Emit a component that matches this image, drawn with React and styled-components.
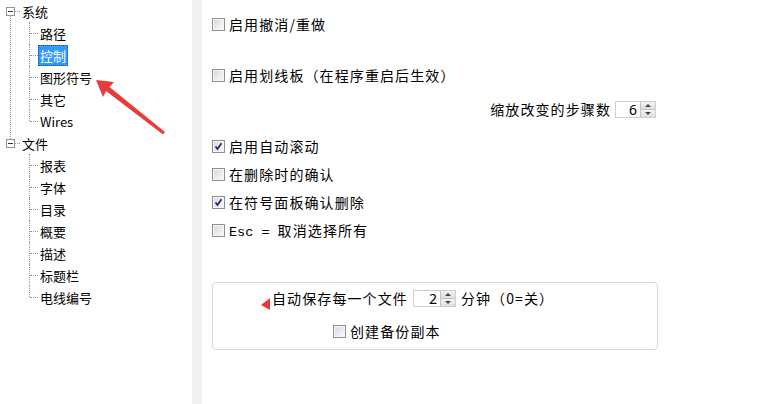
import React from "react";
import styled, { createGlobalStyle } from "styled-components";

const Global = createGlobalStyle`
  html, body { margin: 0; padding: 0; background: #fff; }
  body { font-family: "Noto Sans", "Noto Sans CJK SC", sans-serif; color: #000; }
`;

const Page = styled.div`
  position: relative;
  width: 776px;
  height: 404px;
  display: flex;
  overflow: hidden;
  background: #fff;
`;

/* ---------- tree ---------- */
const TreePanel = styled.ul`
  width: 192px;
  flex: none;
  margin: 0;
  padding: 0;
  list-style: none;
  background: #fff;
  font-family: "Noto Sans CJK SC", "Noto Sans", sans-serif;
  font-size: 13px;
`;

const TopNode = styled.li`
  position: relative;
  &::before {
    content: "";
    display: ${(p) => (p.$line ? "block" : "none")};
    position: absolute;
    left: 10px;
    top: 16px;
    bottom: -7px;
    border-left: 1px dotted #9a9a9a;
  }
`;

const TopRow = styled.div`
  height: 22px;
  display: flex;
  align-items: center;
  padding-left: 6px;
`;

const Expander = styled.span`
  position: relative;
  width: 7px;
  height: 7px;
  border: 1px solid #949494;
  background: #fff;
  flex: none;
  &::after {
    content: "";
    position: absolute;
    left: 1px;
    top: 3px;
    width: 5px;
    height: 1px;
    background: #333;
  }
`;

const HDots = styled.span`
  width: ${(p) => p.$w}px;
  border-top: 1px dotted #9a9a9a;
  flex: none;
`;

const Label = styled.span`
  display: inline-flex;
  align-items: center;
  height: 21px;
  padding: 0 2px;
  color: ${(p) => (p.$selected ? "#fff" : "#000")};
  background: ${(p) => (p.$selected ? "#3399ff" : "transparent")};
  outline: ${(p) => (p.$selected ? "1px dotted #1c4f8a" : "none")};
  outline-offset: -1px;
  white-space: nowrap;
`;

const Children = styled.ul`
  margin: 0;
  padding: 0 0 0 29px;
  list-style: none;
`;

const ChildRow = styled.li`
  position: relative;
  height: 22px;
  display: flex;
  align-items: center;
  padding-left: 9px;
  &::before {
    content: "";
    position: absolute;
    left: 0;
    top: 0;
    height: ${(p) => (p.$last ? "11px" : "22px")};
    border-left: 1px dotted #9a9a9a;
  }
  &::after {
    content: "";
    position: absolute;
    left: 1px;
    top: 11px;
    width: 8px;
    border-top: 1px dotted #9a9a9a;
  }
`;

const Strip = styled.div`
  width: 10px;
  flex: none;
  background: #f1f1f1;
`;

/* ---------- content ---------- */
const Content = styled.div`
  flex: 1;
  display: flex;
  flex-direction: column;
  padding: 10px 0 0 10px;
  font-family: "Noto Sans CJK SC", "Noto Sans", sans-serif;
  font-size: 14px;
  letter-spacing: 1.1px;
`;

const Row = styled.div`
  height: ${(p) => p.$h || 28}px;
  margin-top: ${(p) => p.$mt || 0}px;
  padding-left: ${(p) => p.$pl || 0}px;
  padding-right: ${(p) => p.$pr || 0}px;
  display: flex;
  align-items: center;
  justify-content: ${(p) => (p.$right ? "flex-end" : "flex-start")};
  gap: 4px;
  white-space: nowrap;
`;

const Box = styled.span`
  width: 11px;
  height: 11px;
  flex: none;
  border: 1px solid #8e8f8f;
  background: linear-gradient(135deg, #d6d6d6 0%, #eeeeee 60%, #fafafa 100%);
  box-shadow: inset 0 0 0 1px #f6f6f6;
  display: flex;
  align-items: center;
  justify-content: center;
`;

const Mono = styled.span`
  font-family: "Liberation Mono", monospace;
  font-size: 13.5px;
  letter-spacing: 0;
  white-space: pre;
`;

const Check = ({ checked }) => (
  <Box>
    {checked && (
      <svg width="9" height="9" viewBox="0 0 9 9">
        <path d="M1.5 4.5 L3.5 7 L7.5 1.2" fill="none" stroke="#222a7a" strokeWidth="1.8" />
      </svg>
    )}
  </Box>
);

const SpinWrap = styled.span`
  display: inline-flex;
  width: ${(p) => p.$w}px;
  height: ${(p) => p.$h}px;
  border: 1px solid #cfcfcf;
  background: #fff;
  margin-left: ${(p) => p.$ml || 0}px;
  margin-right: ${(p) => p.$mr || 0}px;
  box-sizing: border-box;
  letter-spacing: 0;
`;

const SpinValue = styled.span`
  flex: 1;
  text-align: right;
  padding-right: 3px;
  font-family: "Noto Sans", sans-serif;
  font-size: 14px;
  line-height: ${(p) => p.$h - 2}px;
`;

const SpinButtons = styled.span`
  width: 14px;
  display: flex;
  flex-direction: column;
  border-left: 1px solid #c3c3c3;
`;

const SpinBtn = styled.span`
  flex: 1;
  display: flex;
  align-items: center;
  justify-content: center;
  background: linear-gradient(#f4f4f4, #dedede);
  border-top: ${(p) => (p.$down ? "1px solid #c3c3c3" : "none")};
  &::after {
    content: "";
    border-left: 3px solid transparent;
    border-right: 3px solid transparent;
    ${(p) => (p.$down ? "border-top: 3px solid #444;" : "border-bottom: 3px solid #444;")}
  }
`;

const Spin = ({ value, w, h, ml, mr }) => (
  <SpinWrap $w={w} $h={h} $ml={ml} $mr={mr}>
    <SpinValue $h={h}>{value}</SpinValue>
    <SpinButtons>
      <SpinBtn />
      <SpinBtn $down />
    </SpinButtons>
  </SpinWrap>
);

const Group = styled.div`
  margin-top: 38px;
  width: 446px;
  height: 68px;
  box-sizing: border-box;
  border: 1px solid #d9d9d9;
  border-radius: 4px;
  padding-top: 5px;
  display: flex;
  flex-direction: column;
  gap: 13px;
`;

const Overlay = styled.svg`
  position: absolute;
  left: 0;
  top: 0;
  pointer-events: none;
`;

const system = ["路径", "控制", "图形符号", "其它", "Wires"];
const files = ["报表", "字体", "目录", "概要", "描述", "标题栏", "电线编号"];

export default function App() {
  return (
    <>
      <Global />
      <Page>
        <TreePanel>
          <TopNode $line>
            <TopRow>
              <Expander />
              <HDots $w={5} />
              <Label>系统</Label>
            </TopRow>
            <Children>
              {system.map((t, i) => (
                <ChildRow key={t} $last={i === system.length - 1}>
                  <Label $selected={t === "控制"}>{t}</Label>
                </ChildRow>
              ))}
            </Children>
          </TopNode>
          <TopNode>
            <TopRow>
              <Expander />
              <HDots $w={5} />
              <Label>文件</Label>
            </TopRow>
            <Children>
              {files.map((t, i) => (
                <ChildRow key={t} $last={i === files.length - 1}>
                  <Label>{t}</Label>
                </ChildRow>
              ))}
            </Children>
          </TopNode>
        </TreePanel>
        <Strip />
        <Content>
          <Row>
            <Check />
            <span>启用撤消/重做</span>
          </Row>
          <Row $mt={23}>
            <Check />
            <span>启用划线板（在程序重启后生效）</span>
          </Row>
          <Row $mt={6} $right $pr={120}>
            <span>缩放改变的步骤数</span>
            <Spin value="6" w={41} h={17} />
          </Row>
          <Row $mt={9}>
            <Check checked />
            <span>启用自动滚动</span>
          </Row>
          <Row>
            <Check />
            <span>在删除时的确认</span>
          </Row>
          <Row>
            <Check checked />
            <span>在符号面板确认删除</span>
          </Row>
          <Row>
            <Check />
            <span>
              <Mono>Esc = </Mono>取消选择所有
            </span>
          </Row>
          <Group>
            <Row $h={20} $pl={59}>
              <span>自动保存每一个文件</span>
              <Spin value="2" w={43} h={17} ml={1} mr={1} />
              <span>分钟（0=关）</span>
            </Row>
            <Row $h={20} $pl={120}>
              <Check />
              <span>创建备份副本</span>
            </Row>
          </Group>
        </Content>
        <Overlay width="776" height="404" viewBox="0 0 776 404">
          <polygon
            points="96,80 114,82 109.5,87 165,132 163,134.5 106,91 103,97"
            fill="#ea3b3b"
          />
          <polygon points="270,298 261,305 270,310" fill="#ea3b3b" />
        </Overlay>
      </Page>
    </>
  );
}
